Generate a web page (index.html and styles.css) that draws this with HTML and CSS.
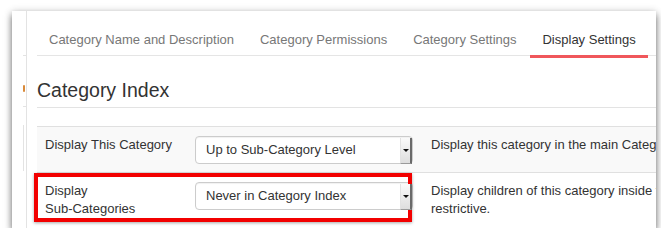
FILE: index.html
```html
<!DOCTYPE html>
<html lang="en">
<head>
    <meta charset="UTF-8">
    <title>Category Display Settings</title>
    <link rel="stylesheet" href="styles.css">
</head>
<body>
    <div class="shot">
        <div class="side">
            <div class="side-mark mark-tabs"></div>
            <div class="side-dot"></div>
            <div class="side-mark mark-head"></div>
            <div class="side-bar"></div>
        </div>
        <div class="main">
            <ul class="tabs">
                <li>Category Name and Description</li>
                <li>Category Permissions</li>
                <li>Category Settings</li>
                <li class="active">Display Settings</li>
            </ul>
            <h2>Category Index</h2>
            <div class="table">
                <div class="row odd">
                    <div class="label">Display This Category</div>
                    <div class="select">
                        <span class="value">Up to Sub-Category Level</span>
                        <span class="arrow"></span>
                    </div>
                    <div class="desc nowrap">Display this category in the main Category Index, at the chosen level.</div>
                </div>
                <div class="row">
                    <div class="highlight"></div>
                    <div class="label">Display<br>Sub-Categories</div>
                    <div class="select">
                        <span class="value">Never in Category Index</span>
                        <span class="arrow"></span>
                    </div>
                    <div class="desc nowrap">Display children of this category inside the Category Index, if more<br>restrictive.</div>
                </div>
            </div>
        </div>
    </div>
</body>
</html>
```

FILE: styles.css
```css
body {
    margin: 0;
    padding: 0;
    background-color: white;
    font-family: "Liberation Sans", Arial, sans-serif;
    color: #333;
    overflow: hidden;
}
.shot {
    position: relative;
    display: flex;
    width: 644px;
    height: 217px;
    margin: 11px 0 0 12px;
    background-color: white;
    overflow: hidden;
    box-shadow: 0 4px 7px rgba(0, 0, 0, 0.55), 0 0 8px rgba(0, 0, 0, 0.12);
}
.side {
    width: 14px;
    flex-shrink: 0;
    border-right: 1px solid #e3e3e3;
    display: flex;
    flex-direction: column;
    align-items: flex-end;
}
.side-mark {
    width: 3px;
    border-top: 1px solid #e3e3e3;
}
.mark-tabs {
    margin-top: 44px;
}
.side-dot {
    width: 2px;
    height: 7px;
    margin-top: 29px;
    margin-right: 1px;
    border-radius: 1px;
    background-color: #d98a3a;
}
.mark-head {
    margin-top: 14px;
}
.side-bar {
    width: 1px;
    height: 46px;
    margin-top: 18px;
    margin-right: 2px;
    background-color: #e3e3e3;
}
.main {
    flex-grow: 1;
    padding-left: 10px;
    overflow: hidden;
}
.tabs {
    display: flex;
    margin: 0;
    padding: 0;
    list-style: none;
    border-bottom: 1px solid #e5e5e5;
    width: 700px;
}
.tabs li {
    padding: 20px 12px 6px;
    margin-right: 2px;
    font-size: 13px;
    line-height: 18px;
    color: #777;
    white-space: nowrap;
}
.tabs li.active {
    color: #333;
    border-bottom: 3px solid #f0575b;
    margin-bottom: -3px;
}
h2 {
    margin: 23px 0 0;
    padding-bottom: 6px;
    font-size: 19.5px;
    font-weight: normal;
    line-height: 22px;
    border-bottom: 1px solid #e3e3e3;
    width: 700px;
}
.table {
    margin-top: 18px;
    width: 700px;
}
.row {
    position: relative;
    display: flex;
    align-items: flex-start;
    padding: 9px 8px 8px;
    border-top: 1px solid #e0e0e0;
}
.row.odd {
    background-color: #f9f9f9;
}
.label {
    width: 150px;
    flex-shrink: 0;
    font-size: 13px;
    line-height: 18px;
}
.select {
    display: flex;
    align-items: stretch;
    width: 218px;
    height: 28px;
    flex-shrink: 0;
    box-sizing: border-box;
    background-color: white;
    border: 1px solid #ccc;
    border-radius: 4px;
    box-shadow: inset 0 1px 1px rgba(0, 0, 0, 0.06);
}
.select .value {
    flex-grow: 1;
    padding-left: 10px;
    font-size: 13px;
    line-height: 26px;
    color: #333;
}
.select .arrow {
    position: relative;
    width: 9px;
    margin: 1px 0 -1px;
    background: linear-gradient(#fafafa, #dedede);
    border-left: 1px solid #e2e2e2;
    border-right: 2px solid #6a6a6a;
    border-bottom: 1px solid #9a9a9a;
}
.select .arrow::after {
    content: "";
    position: absolute;
    left: 2px;
    top: 11px;
    border-left: 3px solid transparent;
    border-right: 3px solid transparent;
    border-top: 3px solid #111;
}
.desc {
    margin-left: 18px;
    font-size: 13px;
    line-height: 18px;
}
.nowrap {
    white-space: nowrap;
}
.highlight {
    position: absolute;
    left: -3px;
    top: 0;
    width: 378px;
    height: 49px;
    box-sizing: border-box;
    border: 4px solid #f20000;
    box-shadow: 0 1px 3px rgba(0, 0, 0, 0.35);
}
```
